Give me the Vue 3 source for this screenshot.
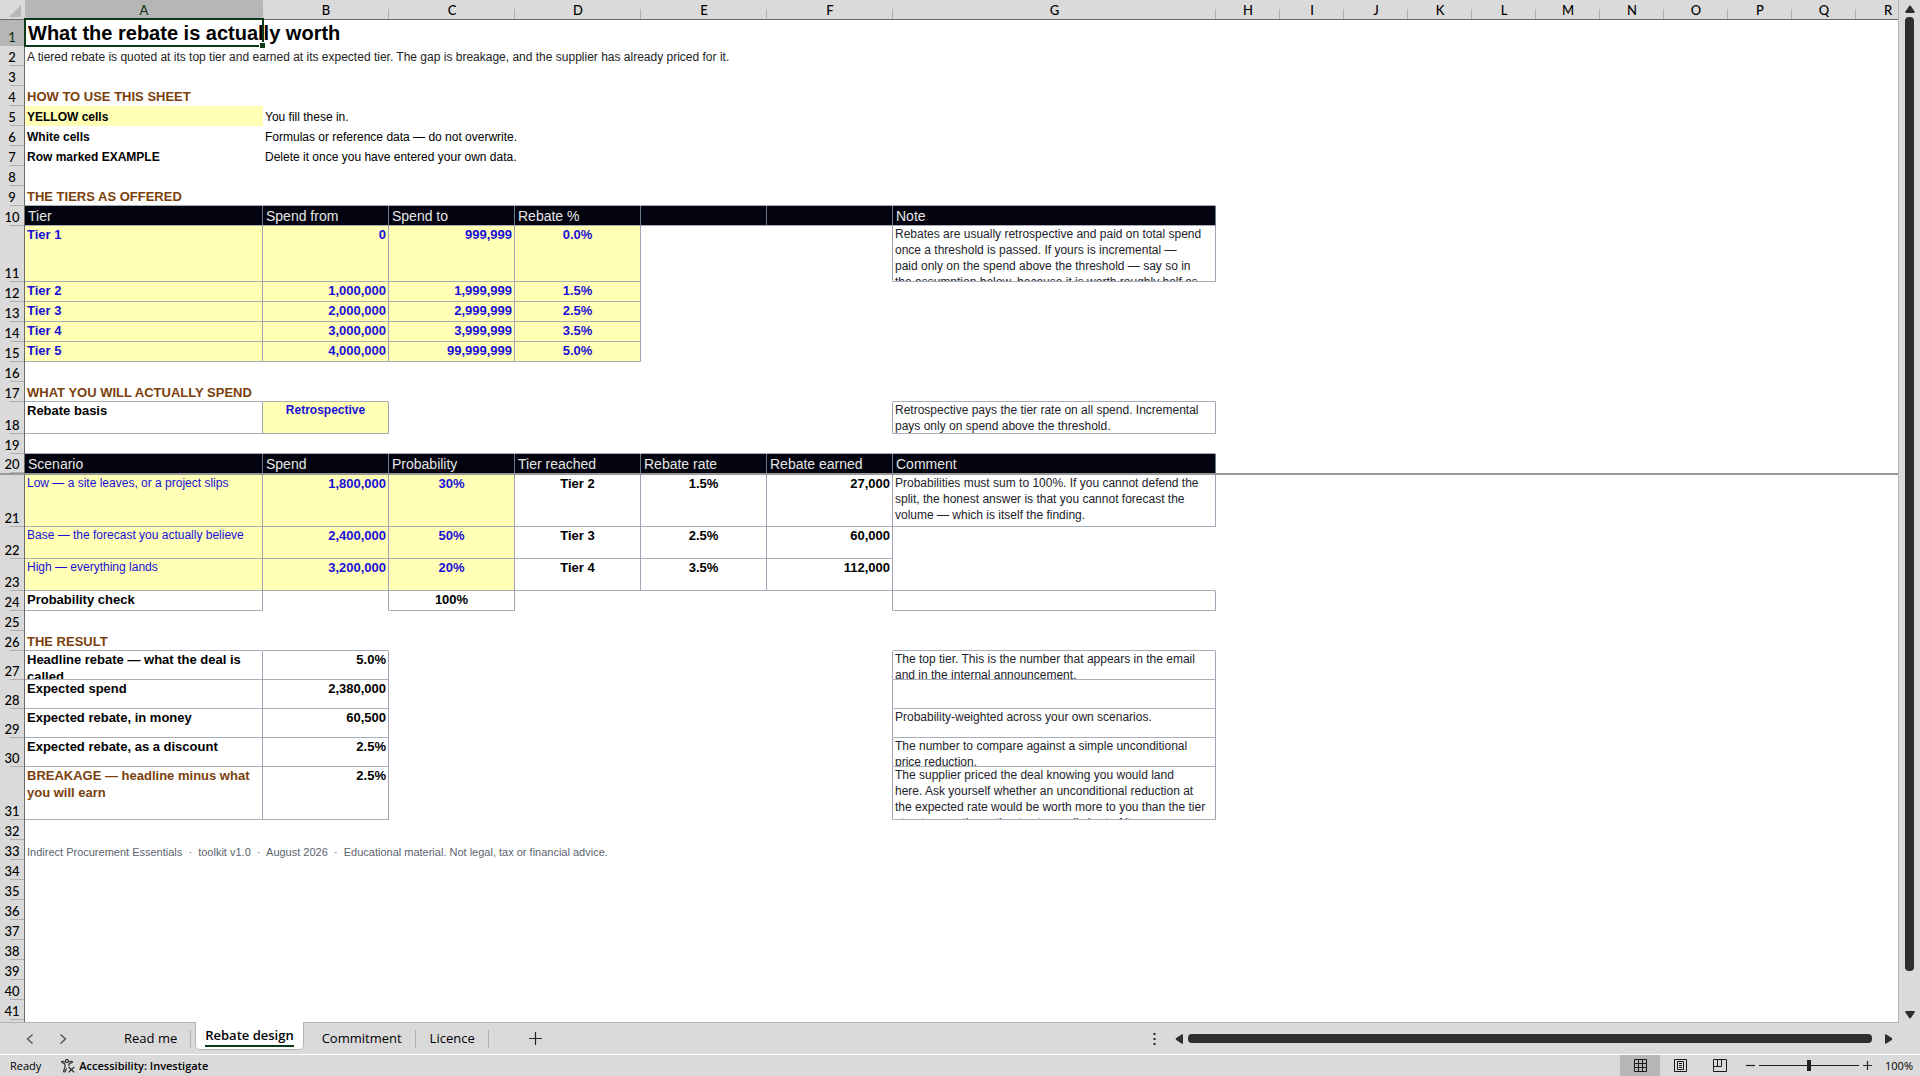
<script setup>
import { ref } from 'vue'

const letters = 'ABCDEFGHIJKLMNOPQR'.split('')
const zoom = ref(100)
const tabs = ['Read me', 'Rebate design', 'Commitment', 'Licence']
const active = ref('Rebate design')

// Cell shorthand: [text, classes]; "box" marks a bordered cell.
const head = (texts) =>
  Object.fromEntries(texts.map((t, i) => [letters[i], [t, 'box head']]))
const tier = (name, from, to, rate) => ({
  A: [name, 'box input strong'],
  B: [from, 'box input strong right'],
  C: [to, 'box input strong right'],
  D: [rate, 'box input strong center'],
})
const scenario = (name, spend, prob, reached, rate, earned) => ({
  A: [name, 'box input small'],
  B: [spend, 'box input strong right'],
  C: [prob, 'box input strong center'],
  D: [reached, 'box strong center'],
  E: [rate, 'box strong center'],
  F: [earned, 'box strong right'],
})
const result = (name, value, note, extra = '') => ({
  A: [name, 'box strong wrap ' + extra],
  B: [value, 'box strong right'],
  G: [note, 'box note wrap'],
})

const content = {
  1: { h: 26, A: ['What the rebate is actually worth', 'title'] },
  2: { A: ['A tiered rebate is quoted at its top tier and earned at its expected tier. The gap is breakage, and the supplier has already priced for it.', 'small soft'] },
  4: { A: ['HOW TO USE THIS SHEET', 'section'] },
  5: { A: ['YELLOW cells', 'key yellow'], B: ['You fill these in.', 'small'] },
  6: { A: ['White cells', 'key'], B: ['Formulas or reference data — do not overwrite.', 'small'] },
  7: { A: ['Row marked EXAMPLE', 'key'], B: ['Delete it once you have entered your own data.', 'small'] },
  9: { A: ['THE TIERS AS OFFERED', 'section'] },
  10: head(['Tier', 'Spend from', 'Spend to', 'Rebate %', '', '', 'Note']),
  11: {
    h: 56,
    ...tier('Tier 1', '0', '999,999', '0.0%'),
    G: ['Rebates are usually retrospective and paid on total spend once a threshold is passed. If yours is incremental —\npaid only on the spend above the threshold — say so in\nthe assumption below, because it is worth roughly half as much.', 'box note wrap'],
  },
  12: tier('Tier 2', '1,000,000', '1,999,999', '1.5%'),
  13: tier('Tier 3', '2,000,000', '2,999,999', '2.5%'),
  14: tier('Tier 4', '3,000,000', '3,999,999', '3.5%'),
  15: tier('Tier 5', '4,000,000', '99,999,999', '5.0%'),
  17: { A: ['WHAT YOU WILL ACTUALLY SPEND', 'section'] },
  18: {
    h: 32,
    A: ['Rebate basis', 'box strong'],
    B: ['Retrospective', 'box input choice center'],
    G: ['Retrospective pays the tier rate on all spend. Incremental pays only on spend above the threshold.', 'box note wrap'],
  },
  20: { h: 21, ...head(['Scenario', 'Spend', 'Probability', 'Tier reached', 'Rebate rate', 'Rebate earned', 'Comment']) },
  21: {
    h: 52,
    ...scenario('Low — a site leaves, or a project slips', '1,800,000', '30%', 'Tier 2', '1.5%', '27,000'),
    G: ['Probabilities must sum to 100%. If you cannot defend the split, the honest answer is that you cannot forecast the volume — which is itself the finding.', 'box note wrap'],
  },
  22: { h: 32, ...scenario('Base — the forecast you actually believe', '2,400,000', '50%', 'Tier 3', '2.5%', '60,000') },
  23: { h: 32, ...scenario('High — everything lands', '3,200,000', '20%', 'Tier 4', '3.5%', '112,000') },
  24: { A: ['Probability check', 'box strong'], C: ['100%', 'box strong center'], G: ['', 'box'] },
  26: { A: ['THE RESULT', 'section'] },
  27: { h: 29, ...result('Headline rebate — what the deal is called', '5.0%', 'The top tier. This is the number that appears in the email and in the internal announcement.') },
  28: { h: 29, ...result('Expected spend', '2,380,000', '') },
  29: { h: 29, ...result('Expected rebate, in money', '60,500', 'Probability-weighted across your own scenarios.') },
  30: { h: 29, ...result('Expected rebate, as a discount', '2.5%', 'The number to compare against a simple unconditional price reduction.') },
  31: { h: 53, ...result('BREAKAGE — headline minus what you will earn', '2.5%', 'The supplier priced the deal knowing you would land\nhere. Ask yourself whether an unconditional reduction at\nthe expected rate would be worth more to you than the tier\nstructure, or the option to stop well short of it.', 'brown') },
  33: { A: ['Indirect Procurement Essentials  ·  toolkit v1.0  ·  August 2026  ·  Educational material. Not legal, tax or financial advice.', 'footnote'] },
}

const classOf = (r, c) => content[r]?.[letters[c]]?.[1] ?? ''
const boxed = (r, c) => /\bbox\b/.test(classOf(r, c))

const rows = Array.from({ length: 41 }, (_, i) => {
  const n = i + 1
  return {
    n,
    height: content[n]?.h ?? 20,
    cells: letters.map((letter, c) => ({
      letter,
      text: content[n]?.[letter]?.[0] ?? '',
      cls: [
        classOf(n, c),
        boxed(n, c) || boxed(n, c + 1) ? 'line-right' : '',
        boxed(n, c) || boxed(n + 1, c) ? 'line-bottom' : '',
      ],
    })),
  }
})
</script>

<template>
  <div class="app">
    <main class="work">
      <div class="sheet">
        <table>
          <colgroup>
            <col class="w-rowhead" />
            <col v-for="l in letters" :key="l" :class="'w-' + (l === 'A' ? 'a' : l === 'G' ? 'g' : l < 'G' ? 'mid' : 'std')" />
          </colgroup>
          <thead>
            <tr>
              <th class="corner"><svg width="12" height="12" viewBox="0 0 12 12"><path d="M12 0V12H0Z" fill="#b8b8b8" /></svg></th>
              <th v-for="l in letters" :key="l" scope="col" :class="['colhead', { picked: l === 'A' }]">{{ l }}</th>
            </tr>
          </thead>
          <tbody>
            <tr v-for="row in rows" :key="row.n" :class="{ freeze: row.n === 20 }" :style="{ '--h': row.height + 'px' }">
              <th scope="row" :class="['rowhead', { picked: row.n === 1 }]">{{ row.n }}</th>
              <td v-for="cell in row.cells" :key="cell.letter" :class="cell.cls">
                <div v-if="cell.text" class="text">{{ cell.text }}</div>
                <span v-if="row.n === 1 && cell.letter === 'A'" class="cursor"></span>
              </td>
            </tr>
          </tbody>
        </table>
      </div>
      <div class="vscroll">
        <button aria-label="Scroll up"><svg width="10" height="8" viewBox="0 0 10 8"><path d="M4 1.2Q5 0 6 1.2L9.6 6.6Q10 8 9 8H1Q0 8 .4 6.6Z" fill="#2e2e2e" /></svg></button>
        <div class="vthumb"></div>
        <button class="down" aria-label="Scroll down"><svg width="10" height="8" viewBox="0 0 10 8"><path d="M4 6.8Q5 8 6 6.8L9.6 1.4Q10 0 9 0H1Q0 0 .4 1.4Z" fill="#2e2e2e" /></svg></button>
      </div>
    </main>

    <nav class="tabbar">
      <div class="arrows">
        <button aria-label="Previous sheet"><svg width="8" height="12" viewBox="0 0 8 12"><path d="M6.5 1.5L1.5 6L6.5 10.5" /></svg></button>
        <button aria-label="Next sheet"><svg width="8" height="12" viewBox="0 0 8 12"><path d="M1.5 1.5L6.5 6L1.5 10.5" /></svg></button>
      </div>
      <div class="tabs">
        <button v-for="t in tabs" :key="t" :class="['tab', { on: t === active }]" @click="active = t"><span>{{ t }}</span></button>
      </div>
      <button class="add" aria-label="New sheet"><svg width="13" height="13" viewBox="0 0 13 13"><path d="M6.5 0V13M0 6.5H13" stroke="#222" stroke-width="1.2" /></svg></button>
      <div class="hscroll">
        <svg class="dots" width="3" height="12" viewBox="0 0 3 12"><path d="M.5 1h2M.5 6h2M.5 11h2" stroke="#222" stroke-width="2" /></svg>
        <button aria-label="Scroll left"><svg width="8" height="10" viewBox="0 0 8 10"><path d="M1.2 4Q0 5 1.2 6L6.6 9.6Q8 10 8 9V1Q8 0 6.6 .4Z" fill="#2e2e2e" /></svg></button>
        <div class="hthumb"></div>
        <button class="fwd" aria-label="Scroll right"><svg width="8" height="10" viewBox="0 0 8 10"><path d="M6.8 4Q8 5 6.8 6L1.4 9.6Q0 10 0 9V1Q0 0 1.4 .4Z" fill="#2e2e2e" /></svg></button>
      </div>
    </nav>

    <footer class="status">
      <span class="ready">Ready</span>
      <button class="access">
        <svg width="14" height="14" viewBox="0 0 14 14" fill="none" stroke="#222" stroke-width="1.1">
          <circle cx="6" cy="2" r="1.5" />
          <path d="M4.4 3.3L1.6 2.2Q.4 2.2 .8 3.4L4 5V8L2.6 12Q2.8 13.6 4 12.8L5.6 9.4M7.6 3.3L10.4 2.2Q11.8 2.2 11.2 3.4L8 5V7" />
          <path d="M7.6 8L13.2 13.4M13.2 8L7.6 13.4" />
        </svg>
        <span>Accessibility: Investigate</span>
      </button>
      <div class="views">
        <button class="view on" aria-label="Normal view"><svg width="13" height="13" viewBox="0 0 13 13"><path d="M.5 .5H12.5V12.5H.5ZM4.5 .5V12.5M8.5 .5V12.5M.5 4.5H12.5M.5 8.5H12.5" /></svg></button>
        <button class="view" aria-label="Page layout view"><svg width="13" height="13" viewBox="0 0 13 13"><path d="M.5 .5H12.5V12.5H.5ZM3.5 2.5H9.5V10.5H3.5ZM5 4.5H8M5 6.5H8M5 8.5H8" /></svg></button>
        <button class="view" aria-label="Page break preview"><svg width="14" height="13" viewBox="0 0 14 13"><path d="M.5 .5H13.5V12.5H.5ZM4.5 .5V7.5M8.5 .5V7.5M.5 7.5H8.5" /></svg></button>
      </div>
      <div class="zoom">
        <button aria-label="Zoom out"><svg width="9" height="9" viewBox="0 0 9 9"><path d="M0 4.5H9" /></svg></button>
        <input v-model="zoom" type="range" min="10" max="190" aria-label="Zoom" />
        <button aria-label="Zoom in"><svg width="9" height="9" viewBox="0 0 9 9"><path d="M0 4.5H9M4.5 0V9" /></svg></button>
        <span class="percent">{{ zoom }}%</span>
      </div>
    </footer>
  </div>
</template>

<style>
body {
  margin: 0;
  background: #dadada;
}
</style>

<style scoped>
.app {
  display: flex;
  flex-direction: column;
  height: 100vh;
  overflow: hidden;
  background: #dadada;
  color: #000;
  font-family: "Open Sans", "Noto Sans", sans-serif;
  font-size: 13px;
}
button {
  display: flex;
  align-items: center;
  justify-content: center;
  margin: 0;
  padding: 0;
  border: 0;
  background: none;
  color: inherit;
  font: inherit;
}
.work {
  display: flex;
  flex: 1;
  min-height: 0;
}
.sheet {
  flex: 1;
  min-width: 0;
  overflow: hidden;
  border-right: 1px solid #b4b4b4;
  border-bottom: 1px solid #b4b4b4;
  background: linear-gradient(to right, #dadada 24px, #6a6a6a 24px, #6a6a6a 25px, #fff 25px);
}

/* Grid */
table {
  width: 1919px;
  table-layout: fixed;
  border-collapse: separate;
  border-spacing: 0;
  font-family: "Liberation Sans", Arial, sans-serif;
}
.w-rowhead { width: 25px; }
.w-a { width: 238px; }
.w-mid { width: 126px; }
.w-g { width: 323px; }
.w-std { width: 64px; }
th, td {
  box-sizing: border-box;
  padding: 0;
}
.corner, .colhead {
  height: 20px;
  border-bottom: 1px solid #6a6a6a;
  background: #dadada;
}
.corner {
  padding: 0 4px 2px 0;
  line-height: 0;
  text-align: right;
  vertical-align: bottom;
}
.colhead, .rowhead {
  font-family: Lato, "Open Sans", sans-serif;
  font-size: 13px;
  font-weight: 500;
  line-height: 18px;
}
.colhead {
  padding-top: 1px;
  background: linear-gradient(#b0b0b0, #b0b0b0) no-repeat right bottom / 1px 10px #dadada;
}
.rowhead {
  height: var(--h);
  border-right: 1px solid #6a6a6a;
  background: linear-gradient(#b0b0b0, #b0b0b0) no-repeat right bottom / 14px 1px #dadada;
  vertical-align: bottom;
}
.colhead.picked, .rowhead.picked {
  background-color: #b6b6b6;
  color: #0b3317;
}
td {
  height: var(--h);
  border-right: 1px solid transparent;
  border-bottom: 1px solid transparent;
  color: #000;
  font-size: 13px;
  line-height: 17px;
  white-space: pre;
  vertical-align: bottom;
}
td.line-right { border-right-color: #a3a3b5; }
td.line-bottom { border-bottom-color: #a9adb8; }
td.box { vertical-align: top; }
.freeze td, .freeze th { border-bottom: 2px solid #999; }
.freeze td:not(.box) { border-right: 0; }
.text {
  width: 0;
  min-width: 100%;
  box-sizing: border-box;
  padding: 0 2px;
}
.wrap .text {
  height: calc(var(--h) - 1px);
  overflow: hidden;
  white-space: pre-line;
}
td.title {
  position: relative;
  font-size: 20px;
  font-weight: 700;
  line-height: 24px;
  vertical-align: middle;
}
.title .text { padding-left: 3px; }
.section, .brown {
  color: #7b3f0c;
  font-weight: 700;
}
td.key, td.small {
  font-size: 12px;
  line-height: 16px;
}
.key { font-weight: 700; }
.soft { color: #222; }
.strong { font-weight: 700; }
td.brown { color: #7b3f0c; }
td.note {
  color: #22222a;
  font-size: 12px;
  line-height: 16px;
}
td.footnote {
  color: #5b6470;
  font-size: 11px;
  line-height: 14px;
}
.yellow, .input { background: #ffffb5; }
td.input { color: #1a10d8; }
td.choice { font-size: 12px; font-weight: 700; }
.right { text-align: right; }
.center { text-align: center; }
td.head {
  border-right-color: #6b7a8a;
  background: #02030f;
  color: #e6e6e6;
  font-size: 14px;
  vertical-align: bottom;
}
.head .text { padding-left: 3px; }

/* Selected-cell frame with its fill handle */
.cursor {
  position: absolute;
  inset: -2px -2px -2px -1px;
  border: 2px solid #0c3a19;
}
.cursor::after {
  content: "";
  position: absolute;
  right: -3px;
  bottom: -3px;
  width: 5px;
  height: 5px;
  border: 1px solid #fff;
  border-width: 1px 0 0 1px;
  background: #0c3a19;
}

/* Scroll bars */
.vscroll {
  display: flex;
  flex-direction: column;
  align-items: center;
  width: 21px;
  padding: 5px 0 4px;
  box-sizing: border-box;
}
.vthumb {
  width: 9px;
  flex: 1;
  margin: 4px 0 40px;
  border-radius: 4px;
  background: #2e2e2e;
}
.hscroll {
  display: flex;
  flex: 1;
  align-items: center;
  max-width: 740px;
  margin-left: auto;
  padding-right: 27px;
}
.dots { margin-right: 19px; }
.hthumb {
  flex: 1;
  height: 9px;
  margin: 0 13px 0 5px;
  border-radius: 4px;
  background: #2e2e2e;
}

/* Sheet tabs */
.tabbar {
  display: flex;
  height: 31px;
  border-bottom: 1px solid #fff;
}
.arrows {
  display: flex;
  gap: 25px;
  width: 82px;
  padding-left: 26px;
}
.arrows svg {
  fill: none;
  stroke: #555;
  stroke-width: 1.4;
}
.tabs { display: flex; }
.tab {
  height: 28px;
  margin-top: 1px;
  padding: 0 14px;
  position: relative;
}
.tab:first-child { padding-left: 16px; }
.tab:not(.on)::after {
  content: "";
  position: absolute;
  right: 0;
  top: 6px;
  width: 1px;
  height: 18px;
  background: #b0b0b0;
}
.tab.on {
  margin: -1px 4px 0 4px;
  padding: 0 9px;
  border: 1px solid #b4b4b4;
  border-top: 0;
  border-radius: 0 0 5px 5px;
  background: #fff;
  font-weight: 600;
}
.tab.on span {
  margin-top: 2px;
  line-height: 19px;
  border-bottom: 2px solid #0c3a19;
}
.add { margin-left: 40px; }

/* Status bar */
.status {
  display: flex;
  align-items: center;
  height: 21px;
  font-size: 11px;
}
.ready { margin: 0 20px 0 10px; }
.access {
  gap: 4px;
  font-weight: 600;
}
.views {
  display: flex;
  align-self: stretch;
  margin-left: auto;
}
.view { width: 40px; }
.view.on { background: #b6b6b6; }
.view svg {
  fill: none;
  stroke: #1a1a1a;
}
.zoom {
  display: flex;
  align-items: center;
  padding-right: 7px;
}
.zoom svg {
  stroke: #222;
  stroke-width: 1.2;
}
.zoom input {
  width: 100px;
  height: 12px;
  margin: 0 4px;
  appearance: none;
  background: linear-gradient(#222, #222) no-repeat center / 100% 1px;
}
.zoom input::-webkit-slider-thumb {
  appearance: none;
  width: 4px;
  height: 11px;
  background: #222;
}
.zoom .percent { margin-left: 13px; }
.views + .zoom { margin-left: 6px; }
</style>
